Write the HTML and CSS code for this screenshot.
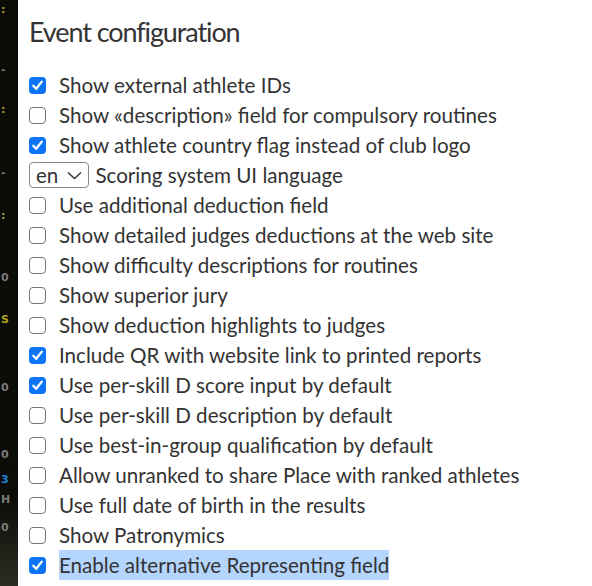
FILE: index.html
```html
<!DOCTYPE html>
<html>
<head>
<meta charset="utf-8">
<link rel="stylesheet" href="styles.css">
</head>
<body>
<div class="page">
  <div class="sidebar">
    <span class="mark m-yellow k1">:</span>
    <span class="mark m-gray k2">-</span>
    <span class="mark m-yellow k3">:</span>
    <span class="mark m-gray k4">-</span>
    <span class="mark m-yellow k5">:</span>
    <span class="mark m-gray k6">0</span>
    <span class="mark m-yellow k7">S</span>
    <span class="mark m-gray k8">0</span>
    <span class="mark m-gray k9">0</span>
    <span class="mark m-blue k10">3</span>
    <span class="mark m-gray k11">H</span>
    <span class="mark m-gray k12">0</span>
  </div>
  <main class="content">
    <h1 class="title">Event configuration</h1>
    <ul class="options">
      <li class="row"><input type="checkbox" class="cb" checked><span class="label">Show external athlete IDs</span></li>
      <li class="row"><input type="checkbox" class="cb"><span class="label">Show «description» field for compulsory routines</span></li>
      <li class="row"><input type="checkbox" class="cb" checked><span class="label">Show athlete country flag instead of club logo</span></li>
      <li class="row"><span class="select">en <svg class="chev" width="15" height="9" viewBox="0 0 15 9"><path d="M1 1.5 L7.5 7.5 L14 1.5" fill="none" stroke="#333" stroke-width="1.4"/></svg></span><span class="label">Scoring system UI language</span></li>
      <li class="row"><input type="checkbox" class="cb"><span class="label">Use additional deduction field</span></li>
      <li class="row"><input type="checkbox" class="cb"><span class="label">Show detailed judges deductions at the web site</span></li>
      <li class="row"><input type="checkbox" class="cb"><span class="label">Show difficulty descriptions for routines</span></li>
      <li class="row"><input type="checkbox" class="cb"><span class="label">Show superior jury</span></li>
      <li class="row"><input type="checkbox" class="cb"><span class="label">Show deduction highlights to judges</span></li>
      <li class="row"><input type="checkbox" class="cb" checked><span class="label">Include QR with website link to printed reports</span></li>
      <li class="row"><input type="checkbox" class="cb" checked><span class="label">Use per-skill D score input by default</span></li>
      <li class="row"><input type="checkbox" class="cb"><span class="label">Use per-skill D description by default</span></li>
      <li class="row"><input type="checkbox" class="cb"><span class="label">Use best-in-group qualification by default</span></li>
      <li class="row"><input type="checkbox" class="cb"><span class="label">Allow unranked to share Place with ranked athletes</span></li>
      <li class="row"><input type="checkbox" class="cb"><span class="label">Use full date of birth in the results</span></li>
      <li class="row"><input type="checkbox" class="cb"><span class="label">Show Patronymics</span></li>
      <li class="row"><input type="checkbox" class="cb" checked><span class="label highlight">Enable alternative Representing field</span></li>
    </ul>
  </main>
</div>
</body>
</html>
```

FILE: styles.css
```css
html, body {
  margin: 0;
  padding: 0;
  background: #ffffff;
}
body {
  font-family: "Lato", "Noto Sans", sans-serif;
  color: #333333;
}
.page {
  display: flex;
  min-height: 586px;
}
.sidebar {
  width: 18px;
  flex: none;
  background: linear-gradient(#0a0a06, #0c0d08 85%, #2a2e22);
  position: relative;
  overflow: hidden;
}
.mark {
  position: absolute;
  left: 1px;
  font-size: 11px;
  line-height: 12px;
  font-family: "DejaVu Sans", sans-serif;
  font-weight: bold;
}
.m-yellow { color: #aaa31c; }
.m-gray { color: #7a7a7a; }
.m-blue { color: #1b86d8; }
.k1 { top: 4px; }
.k2 { top: 64px; }
.k3 { top: 104px; }
.k4 { top: 167px; }
.k5 { top: 210px; }
.k6 { top: 272px; }
.k7 { top: 314px; }
.k8 { top: 382px; }
.k9 { top: 449px; }
.k10 { top: 474px; }
.k11 { top: 494px; }
.k12 { top: 522px; }
.content {
  flex: 1;
  padding-left: 11px;
}
.title {
  margin: 14px 0 0 0;
  font-size: 27px;
  letter-spacing: -1.1px;
  font-weight: 400;
  line-height: 36px;
  color: #333;
}
.options {
  list-style: none;
  margin: 20px 0 0 0;
  padding: 0;
}
.row {
  display: flex;
  align-items: center;
  height: 30px;
  font-size: 20.6px;
}
.cb {
  appearance: none;
  -webkit-appearance: none;
  margin: 0 13px 0 0;
  width: 17px;
  height: 17px;
  border: 1.5px solid #767676;
  border-radius: 4px;
  background: #fff;
  box-sizing: border-box;
  flex: none;
}
.cb:checked {
  border: none;
  background: #0b75f5 url("data:image/svg+xml;utf8,<svg xmlns='http://www.w3.org/2000/svg' width='17' height='17' viewBox='0 0 17 17'><path d='M4.3 8.8 L7.2 11.8 L12.8 4.6' fill='none' stroke='white' stroke-width='2.3' stroke-linecap='round' stroke-linejoin='round'/></svg>") no-repeat center;
}
.select {
  display: inline-flex;
  align-items: center;
  gap: 9px;
  height: 26px;
  box-sizing: border-box;
  padding: 0 6px 0 6px;
  border: 1px solid #8a8a8a;
  border-radius: 4px;
  margin-right: 6px;
  font-size: 20.6px;
}
.label {
  white-space: nowrap;
  line-height: 30px;
}
.highlight {
  background: #b4d5fe;
}
```
